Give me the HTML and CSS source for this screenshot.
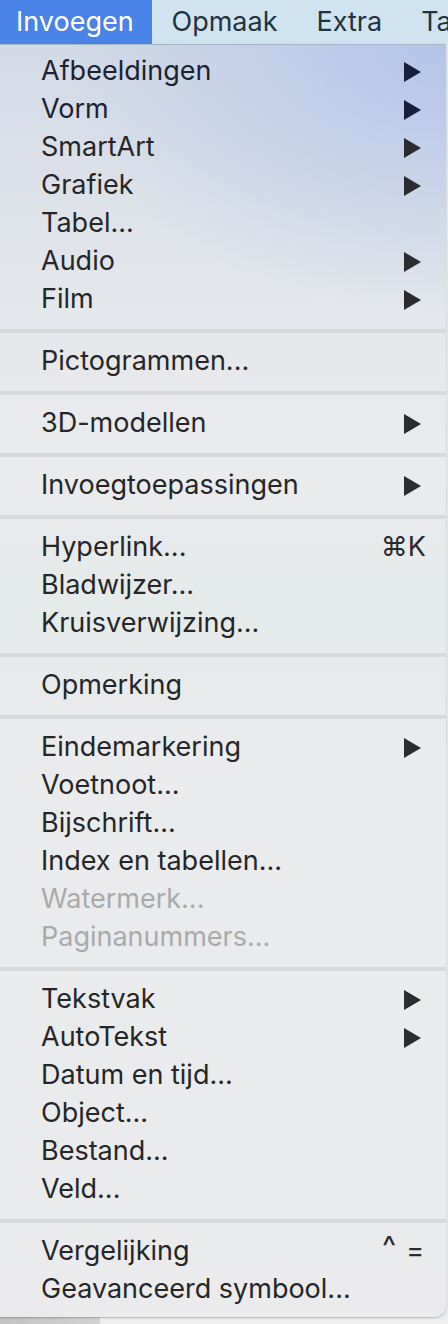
FILE: index.html
```html
<!DOCTYPE html>
<html>
<head>
<meta charset="utf-8">
<link rel="stylesheet" href="styles.css">
</head>
<body>
<div class="menubar">
  <div class="mb-item active">Invoegen</div>
  <div class="mb-item">Opmaak</div>
  <div class="mb-item">Extra</div>
  <div class="mb-item">Tabel</div>
</div>
<div class="stage">
<div class="menu">
  <div class="item top"><span>Afbeeldingen</span><svg class="arrow" viewBox="0 0 17 20"><polygon points="0,0 17,10 0,20"/></svg></div>
  <div class="item top"><span>Vorm</span><svg class="arrow" viewBox="0 0 17 20"><polygon points="0,0 17,10 0,20"/></svg></div>
  <div class="item"><span>SmartArt</span><svg class="arrow" viewBox="0 0 17 20"><polygon points="0,0 17,10 0,20"/></svg></div>
  <div class="item"><span>Grafiek</span><svg class="arrow" viewBox="0 0 17 20"><polygon points="0,0 17,10 0,20"/></svg></div>
  <div class="item"><span>Tabel...</span></div>
  <div class="item"><span>Audio</span><svg class="arrow" viewBox="0 0 17 20"><polygon points="0,0 17,10 0,20"/></svg></div>
  <div class="item"><span>Film</span><svg class="arrow" viewBox="0 0 17 20"><polygon points="0,0 17,10 0,20"/></svg></div>
  <div class="sep"></div>
  <div class="item"><span>Pictogrammen...</span></div>
  <div class="sep"></div>
  <div class="item"><span>3D-modellen</span><svg class="arrow" viewBox="0 0 17 20"><polygon points="0,0 17,10 0,20"/></svg></div>
  <div class="sep"></div>
  <div class="item"><span>Invoegtoepassingen</span><svg class="arrow" viewBox="0 0 17 20"><polygon points="0,0 17,10 0,20"/></svg></div>
  <div class="sep"></div>
  <div class="item"><span>Hyperlink...</span><span class="key">⌘K</span></div>
  <div class="item"><span>Bladwijzer...</span></div>
  <div class="item"><span>Kruisverwijzing...</span></div>
  <div class="sep"></div>
  <div class="item"><span>Opmerking</span></div>
  <div class="sep"></div>
  <div class="item"><span>Eindemarkering</span><svg class="arrow" viewBox="0 0 17 20"><polygon points="0,0 17,10 0,20"/></svg></div>
  <div class="item"><span>Voetnoot...</span></div>
  <div class="item"><span>Bijschrift...</span></div>
  <div class="item"><span>Index en tabellen...</span></div>
  <div class="item disabled"><span>Watermerk...</span></div>
  <div class="item disabled"><span>Paginanummers...</span></div>
  <div class="sep"></div>
  <div class="item"><span>Tekstvak</span><svg class="arrow" viewBox="0 0 17 20"><polygon points="0,0 17,10 0,20"/></svg></div>
  <div class="item"><span>AutoTekst</span><svg class="arrow" viewBox="0 0 17 20"><polygon points="0,0 17,10 0,20"/></svg></div>
  <div class="item"><span>Datum en tijd...</span></div>
  <div class="item"><span>Object...</span></div>
  <div class="item"><span>Bestand...</span></div>
  <div class="item"><span>Veld...</span></div>
  <div class="sep"></div>
  <div class="item"><span>Vergelijking</span><span class="key combo"><span class="hat">^</span><span>=</span></span></div>
  <div class="item"><span>Geavanceerd symbool...</span></div>
</div>
</div>
</body>
</html>
```

FILE: styles.css
```css
html, body {
  margin: 0;
  padding: 0;
}
body {
  width: 448px;
  height: 1324px;
  overflow: hidden;
  font-family: "Inter", "Noto Sans", sans-serif;
  background: linear-gradient(to right, #c3c3c3 0, #d2d2d2 100px, #eeeeee 100px);
}
.menubar {
  height: 44px;
  display: flex;
  align-items: center;
  background: #cfe4f0;
  overflow: hidden;
  white-space: nowrap;
}
.mb-item {
  flex: none;
  height: 44px;
  line-height: 44px;
  font-size: 27px;
  color: #1f3340;
  padding: 0 19.5px;
}
.mb-item.active {
  background: #4a83e8;
  color: #ffffff;
  box-sizing: border-box;
  width: 152px;
  padding: 0 0 0 16px;
}
.stage {
  background: #e6ecee;
}
.menu {
  width: 446px;
  box-sizing: border-box;
  padding: 8px 0;
  border-bottom-right-radius: 12px;
  border-top: 1px solid #a9b5c8;
  background:
    radial-gradient(ellipse 380px 270px at 440px 0, rgba(176,196,232,0.9), rgba(176,196,232,0) 100%),
    linear-gradient(to bottom, #d3dae7 0, #e4e7eb 260px, #eaebed 420px, #e5eaeb 560px, #eaebec 720px, #ebebed 100%);
  box-shadow: 0 1px 2px rgba(0,0,0,0.25);
}
.item {
  height: 38px;
  box-sizing: border-box;
  display: flex;
  align-items: center;
  justify-content: space-between;
  padding: 0 25px 3px 41px;
  font-size: 27px;
  color: #262628;
  white-space: nowrap;
}
.item .arrow {
  margin-top: 3px;
}
.item.top {
  color: #1c2231;
}
.item.top .arrow {
  fill: #16203a;
}
.item.disabled {
  color: #a9aaac;
}
.arrow {
  width: 17px;
  height: 20px;
  fill: #2a2c30;
}
.key {
  margin-right: -5px;
  color: #2b2b2d;
}
.combo {
  display: flex;
  align-items: flex-start;
  gap: 10px;
  margin-right: -3px;
}
.hat {
  font-size: 30px;
  line-height: 1;
  transform: translateY(-3px);
}
.sep {
  height: 4px;
  margin: 10px 0;
  background: #d8d9db;
}
```
